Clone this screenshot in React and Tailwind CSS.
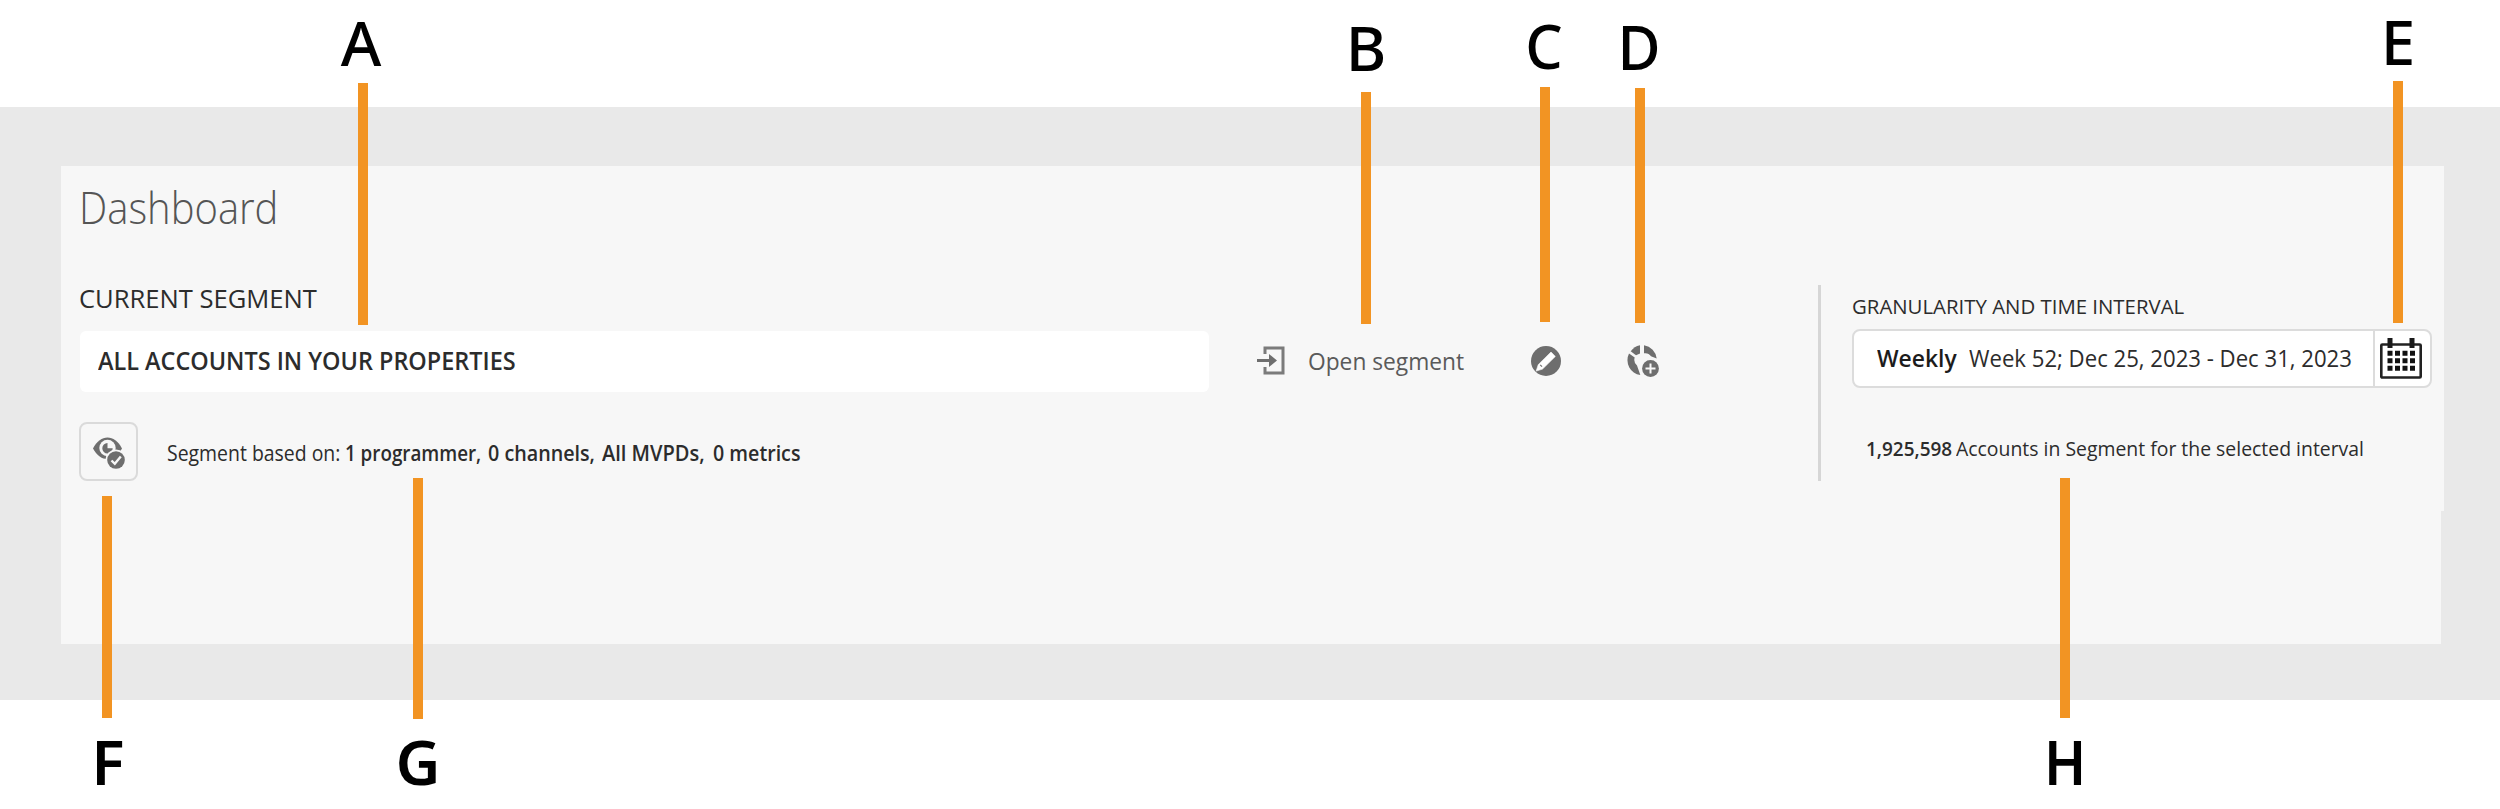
import { useLayoutEffect, useRef, useState } from 'react';

// Scales a single line of text horizontally to the width of its box.
function Fit({ className = '', children }) {
  const box = useRef(null);
  const text = useRef(null);
  const [scale, setScale] = useState(1);
  useLayoutEffect(() => {
    setScale(box.current.clientWidth / text.current.offsetWidth);
  }, []);
  return (
    <span ref={box} className={`block shrink-0 whitespace-nowrap ${className}`}>
      <span ref={text} className="inline-block origin-left" style={{ transform: `scaleX(${scale})` }}>
        {children}
      </span>
    </span>
  );
}

const callouts = [
  { id: 'A', weight: 'font-medium', letter: 'left-[321px] top-[0px]', bar: 'left-[358px] top-[83px] h-[242px]' },
  { id: 'B', weight: 'font-medium', letter: 'left-[1326px] top-[5px]', bar: 'left-[1361px] top-[92px] h-[232px]' },
  { id: 'C', weight: 'font-medium', letter: 'left-[1504px] top-[3px] scale-x-95', bar: 'left-[1540px] top-[87px] h-[235px]' },
  { id: 'D', weight: 'font-medium', letter: 'left-[1599px] top-[4px] scale-x-95', bar: 'left-[1635px] top-[88px] h-[235px]' },
  { id: 'E', weight: 'font-medium', letter: 'left-[2358px] top-[-1px]', bar: 'left-[2393px] top-[81px] h-[242px]' },
  { id: 'F', weight: 'font-semibold', letter: 'left-[68px] top-[719px]', bar: 'left-[102px] top-[496px] h-[222px]' },
  { id: 'G', weight: 'font-semibold', letter: 'left-[378px] top-[719px]', bar: 'left-[413px] top-[478px] h-[241px]' },
  { id: 'H', weight: 'font-semibold', letter: 'left-[2025px] top-[719px] scale-x-90', bar: 'left-[2060px] top-[478px] h-[240px]' },
];

function EyeCheckIcon() {
  return (
    <svg viewBox="0 0 34 34" className="size-[34px]">
      <path d="M1 13.500C5 6 10 2.500 15.500 2.500S26 6 30 13.500c-4 7.500-9 10.500-14.500 10.500S5 21 1 13.500Z" fill="#6e6e6e" />
      <circle cx="15.500" cy="13" r="8.200" fill="#f7f7f7" />
      <path d="M15.500 8a5.200 5.200 0 1 0 5.200 5.200h-5.200Z" fill="#6e6e6e" />
      <circle cx="24" cy="25" r="10.500" fill="#f7f7f7" />
      <circle cx="24" cy="25" r="8.800" fill="#6e6e6e" />
      <path d="m19.500 25.500 3.300 3.300 6-7.300" fill="none" stroke="#f7f7f7" strokeWidth="2.400" />
    </svg>
  );
}

function OpenIcon() {
  return (
    <svg viewBox="0 0 28 29" className="h-[29px] w-7 shrink-0">
      <path d="M8 8V2h18v25H8v-6" fill="none" stroke="#7b7b7b" strokeWidth="3" />
      <path d="M0 13h12V8l8 6.500-8 6.500v-5H0Z" fill="#6e6e6e" />
    </svg>
  );
}

function EditIcon() {
  return (
    <svg viewBox="0 0 30 30" className="size-[30px] shrink-0">
      <circle cx="15" cy="15" r="15" fill="#6e6e6e" />
      <path d="m20 6 4.300 4.400-12.800 12.700-6.300 2 2-6.400Z" fill="#fff" stroke="#fff" strokeWidth=".6" strokeLinejoin="round" />
      <path d="m9.200 18.800 1.800 1.800" stroke="#6e6e6e" strokeWidth="1.200" />
    </svg>
  );
}

function SegmentAddIcon() {
  return (
    <svg viewBox="0 0 32 32" className="size-8 shrink-0">
      <g fill="#6e6e6e">
        <path d="M17 .2A15 15 0 0 1 29.700 13.500L24 11.300A7 7 0 0 0 17 8.300Z" />
        <path d="M13 .2V8.500L9 10.300 3.700 6.300A15 15 0 0 1 13 .2Z" />
        <path d="M2 8.500 7.700 12.500A7.500 7.500 0 0 0 10 20.500L13.300 30A15 15 0 0 1 2 8.500Z" />
      </g>
      <circle cx="23.500" cy="23.500" r="10" fill="#f7f7f7" />
      <circle cx="23.500" cy="23.500" r="8.400" fill="#6e6e6e" />
      <path d="M23.500 18.500v10M18.500 23.500h10" stroke="#f7f7f7" strokeWidth="2" />
    </svg>
  );
}

function CalendarIcon() {
  return (
    <svg viewBox="0 0 42 41" className="h-[41px] w-[42px]">
      <rect x="1.300" y="6.500" width="39.400" height="33" rx="1" fill="none" stroke="#222" strokeWidth="2.600" />
      <path d="M10 0v10M32 0v10" stroke="#1a1a1a" strokeWidth="5" />
      <path d="M7.500 15.300h28M7.500 22.700h28M7.500 30.300h28" stroke="#111" strokeWidth="5" strokeDasharray="5 2.500" />
    </svg>
  );
}

export default function App() {
  return (
    <div className="relative h-[809px] w-[2500px] overflow-hidden bg-white pt-[107px] font-['Open_Sans',sans-serif] text-[#2c2c2c]">
      <div className="h-[593px] bg-[#e9e9e9] pt-[59px] pl-[61px]">
        <div className="relative flex h-[478px] w-[2383px] bg-[#f7f7f7]">
          <section className="w-[1757px] pl-[19px]">
            <h1 className="mt-[11px] ml-[-1px]">
              <Fit className="w-[199px] text-[44px] leading-[60px] font-light text-[#555]">Dashboard</Fit>
            </h1>
            <h2 className="mt-[43px] ml-[-1px]">
              <Fit className="w-[238px] text-[26px] leading-9">CURRENT SEGMENT</Fit>
            </h2>
            <div className="mt-[15px] flex h-[61px] items-center">
              <div className="flex h-[61px] w-[1129px] items-center rounded-md bg-white pb-[3px] pl-[18px]">
                <Fit className="w-[418px] text-[25px] leading-9 font-semibold">ALL ACCOUNTS IN YOUR PROPERTIES</Fit>
              </div>
              <button className="mb-[2px] ml-12 flex items-center gap-[23px] text-[#5a5a5a]">
                <OpenIcon />
                <Fit className="w-[156px] text-[24.5px] leading-9">Open segment</Fit>
              </button>
              <button className="mb-[2px] ml-[67px]"><EditIcon /></button>
              <button className="mb-px ml-[66px]"><SegmentAddIcon /></button>
            </div>
            <div className="mt-[30px] -ml-px flex items-center">
              <div className="flex size-[59px] items-center justify-center rounded-lg border-2 border-[#dadada]">
                <EyeCheckIcon />
              </div>
              <div className="ml-[29px] flex gap-2 pt-[2px] text-[21px] leading-9">
                <Fit className="w-[173px]">Segment based on:</Fit>
                <Fit className="-ml-[3px] w-[136px] font-semibold">1 programmer,</Fit>
                <Fit className="-ml-px w-[107px] font-semibold">0 channels,</Fit>
                <Fit className="-ml-px w-[103px] font-semibold">All MVPDs,</Fit>
                <Fit className="w-[87px] font-semibold">0 metrics</Fit>
              </div>
            </div>
          </section>
          <section className="mt-[119px] h-[196px] w-[614px] border-l-[3px] border-[#d6d6d6] pl-[31px]">
            <h2 className="mt-[3px]">
              <Fit className="w-[332px] text-[20.5px] leading-9">GRANULARITY AND TIME INTERVAL</Fit>
            </h2>
            <div className="mt-[5px] flex h-[59px] w-[580px] rounded-lg border-2 border-[#dcdcdc] bg-white">
              <div className="flex w-[521px] items-center border-r-2 border-[#dcdcdc] pb-[2px] pl-[23px] text-[24px] leading-9">
                <Fit className="w-[80px] font-semibold text-[#1c1c1c]">Weekly</Fit>
                <Fit className="ml-[12px] w-[383px]">Week 52; Dec 25, 2023 - Dec 31, 2023</Fit>
              </div>
              <div className="flex flex-1 items-center justify-center pr-[3px]"><CalendarIcon /></div>
            </div>
            <div className="mt-[42px] ml-[14px] flex text-[20.5px] leading-9">
              <Fit className="w-[86px] font-semibold">1,925,598</Fit>
              <Fit className="ml-[4px] w-[408px]">Accounts in Segment for the selected interval</Fit>
            </div>
          </section>
          <div className="absolute right-0 bottom-0 h-[133px] w-[3px] bg-[#e9e9e9]" />
        </div>
      </div>
      {callouts.map((c) => (
        <div key={c.id}>
          <span className={`absolute w-20 text-center font-['Noto_Sans',sans-serif] text-[62px] leading-[84px] text-black ${c.weight} ${c.letter}`}>{c.id}</span>
          <span className={`absolute w-[10px] bg-[#f29423] ${c.bar}`} />
        </div>
      ))}
    </div>
  );
}
